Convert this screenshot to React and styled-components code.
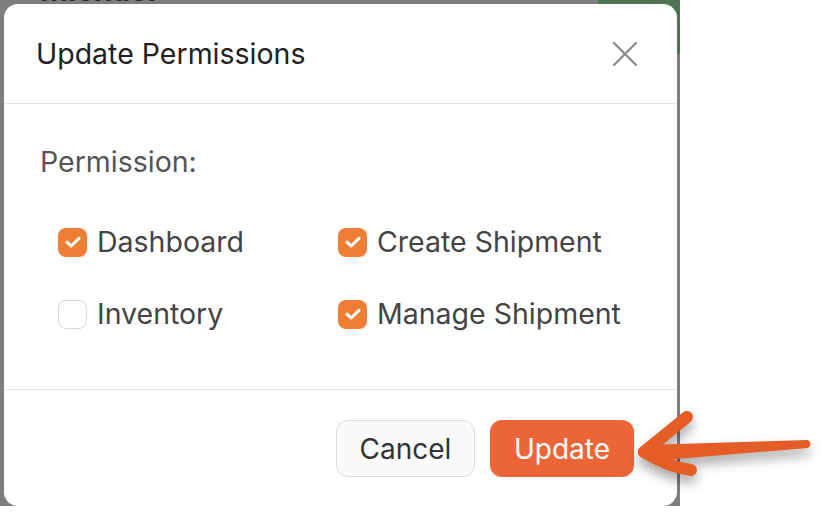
import styled, { createGlobalStyle } from "styled-components";

const GlobalStyle = createGlobalStyle`
    html, body {
        margin: 0;
        padding: 0;
        background: #ffffff;
        font-family: "Inter", "Liberation Sans", sans-serif;
    }
`;

const Page = styled.div`
    position: relative;
    width: 822px;
    height: 514px;
    overflow: hidden;
    background: #ffffff;
`;

const Backdrop = styled.div`
    position: relative;
    width: 680px;
    height: 506px;
    padding: 4px 3px 0 4px;
    box-sizing: border-box;
    background: #7e7e7e;
    overflow: hidden;
`;

const BehindName = styled.span`
    position: absolute;
    left: 40px;
    top: -28px;
    font-size: 30px;
    font-weight: 700;
    color: #2a2a2a;
`;

const BehindBlock = styled.div`
    position: absolute;
    left: 598px;
    top: 0;
    width: 82px;
    height: 54px;
    background: #4e7454;
`;

const Modal = styled.div`
    position: relative;
    display: flex;
    flex-direction: column;
    height: 100%;
    background: #ffffff;
    border-radius: 14px;
`;

const Header = styled.div`
    display: flex;
    align-items: center;
    justify-content: space-between;
    height: 99px;
    padding: 0 38px 0 32px;
    border-bottom: 1.5px solid #e4e4e4;
`;

const Title = styled.h2`
    margin: 0;
    font-size: 28.5px;
    font-weight: 400;
    color: #222222;
`;

const CloseButton = styled.button`
    display: flex;
    align-items: center;
    justify-content: center;
    width: 28px;
    height: 28px;
    padding: 0;
    border: none;
    background: none;
    cursor: pointer;
`;

const Body = styled.div`
    flex: 1;
    padding: 41px 20px 0 36px;
    border-bottom: 1.5px solid #e4e4e4;
`;

const Label = styled.div`
    font-size: 28.5px;
    line-height: 34px;
    color: #555555;
`;

const OptionGrid = styled.div`
    display: grid;
    grid-template-columns: 280px auto;
    row-gap: 38px;
    margin: 46px 0 0 18px;
`;

const Option = styled.label`
    display: flex;
    align-items: center;
    gap: 10px;
    font-size: 28.5px;
    line-height: 34px;
    white-space: nowrap;
    color: #444444;
    cursor: pointer;
`;

const Box = styled.span`
    display: flex;
    align-items: center;
    justify-content: center;
    flex-shrink: 0;
    width: 29px;
    height: 29px;
    box-sizing: border-box;
    border-radius: 8px;
    background: ${({ checked }) => (checked ? "#ef7d34" : "#ffffff")};
    border: ${({ checked }) => (checked ? "none" : "1.5px solid #d6d6d6")};
`;

const Footer = styled.div`
    display: flex;
    justify-content: flex-end;
    gap: 15px;
    padding: 30px 43px 29px 0;
`;

const Button = styled.button`
    height: 57px;
    padding: 0 22px;
    min-width: ${({ primary }) => (primary ? "144px" : "139px")};
    border-radius: 12px;
    font-family: "Inter", "Liberation Sans", sans-serif;
    font-size: 28px;
    cursor: pointer;
    color: ${({ primary }) => (primary ? "#ffffff" : "#333333")};
    background: ${({ primary }) => (primary ? "#ec6538" : "#fafafa")};
    border: ${({ primary }) => (primary ? "none" : "1.5px solid #dcdcdc")};
`;

const Arrow = styled.svg`
    position: absolute;
    left: 630px;
    top: 400px;
    filter: drop-shadow(0 7px 6px rgba(0, 0, 0, 0.35));
`;

const permissions = [
    { name: "Dashboard", checked: true },
    { name: "Create Shipment", checked: true },
    { name: "Inventory", checked: false },
    { name: "Manage Shipment", checked: true },
];

const Check = () => (
    <svg width="16" height="12" viewBox="0 0 16 12">
        <path d="M2 6.2 L6.2 10 L14 2.4" fill="none" stroke="#ffffff" strokeWidth="3" strokeLinecap="round" strokeLinejoin="round" />
    </svg>
);

const App = () => {
    return (
        <Page>
            <GlobalStyle />
            <Backdrop>
                <BehindName>Michael</BehindName>
                <BehindBlock />
                <Modal>
                    <Header>
                        <Title>Update Permissions</Title>
                        <CloseButton>
                            <svg width="26" height="26" viewBox="0 0 26 26">
                                <path d="M2 2 L24 24 M24 2 L2 24" stroke="#8a8a8a" strokeWidth="2.2" strokeLinecap="round" />
                            </svg>
                        </CloseButton>
                    </Header>
                    <Body>
                        <Label>Permission:</Label>
                        <OptionGrid>
                            {permissions.map((p) => (
                                <Option key={p.name}>
                                    <Box checked={p.checked}>{p.checked && <Check />}</Box>
                                    {p.name}
                                </Option>
                            ))}
                        </OptionGrid>
                    </Body>
                    <Footer>
                        <Button>Cancel</Button>
                        <Button primary>Update</Button>
                    </Footer>
                </Modal>
            </Backdrop>
            <Arrow width="192" height="90" viewBox="0 0 192 90">
                <path d="M14 52 L57 17" stroke="#e45d27" strokeWidth="12" strokeLinecap="round" />
                <path d="M14 52 Q38 67 61 70" stroke="#e45d27" strokeWidth="12" strokeLinecap="round" fill="none" />
                <path d="M16 45 L178 40 Q183 44 178 48 L22 61 Q10 54 16 45 Z" fill="#e45d27" />
            </Arrow>
        </Page>
    );
};

export default App;
